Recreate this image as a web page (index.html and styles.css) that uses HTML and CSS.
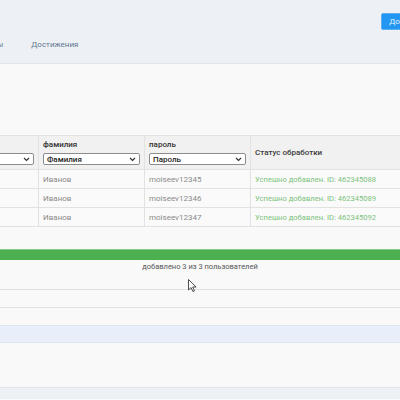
FILE: index.html
```html
<!DOCTYPE html>
<html lang="ru">
<head>
    <meta charset="UTF-8">
    <title>Импорт пользователей</title>
    <link rel="stylesheet" href="styles.css">
</head>
<body>
<div class="top">
    <ul class="nav">
        <li>Группы</li>
        <li>Достижения</li>
    </ul>
    <div class="btn-add">Добавить</div>
</div>
<div class="main">
    <table class="import">
        <thead>
            <tr>
                <th class="col-name">
                    <div class="label">имя</div>
                    <div class="select"><span>Имя</span><svg width="7" height="5" viewBox="0 0 7 5"><path d="M1 1l2.5 2.5L6 1" fill="none" stroke="#333" stroke-width="1.2"/></svg></div>
                </th>
                <th class="col-mid">
                    <div class="label">фамилия</div>
                    <div class="select"><span>Фамилия</span><svg width="7" height="5" viewBox="0 0 7 5"><path d="M1 1l2.5 2.5L6 1" fill="none" stroke="#333" stroke-width="1.2"/></svg></div>
                </th>
                <th class="col-mid">
                    <div class="label">пароль</div>
                    <div class="select"><span>Пароль</span><svg width="7" height="5" viewBox="0 0 7 5"><path d="M1 1l2.5 2.5L6 1" fill="none" stroke="#333" stroke-width="1.2"/></svg></div>
                </th>
                <th class="col-status"><div class="label-status">Статус обработки</div></th>
            </tr>
        </thead>
        <tbody>
            <tr><td>Иван</td><td>Иванов</td><td>moiseev12345</td><td class="ok">Успешно добавлен. ID: 462345088</td></tr>
            <tr><td>Иван</td><td>Иванов</td><td>moiseev12346</td><td class="ok">Успешно добавлен. ID: 462345089</td></tr>
            <tr><td>Иван</td><td>Иванов</td><td>moiseev12347</td><td class="ok">Успешно добавлен. ID: 462345092</td></tr>
        </tbody>
    </table>
    <div class="progress"><div class="progress-bar" style="width:100%"></div></div>
    <div class="progress-text">добавлено 3 из 3 пользователей</div>
    <ul class="rows">
        <li class="row"></li>
        <li class="row"></li>
        <li class="row row-active"></li>
        <li class="row row-tall"></li>
    </ul>
</div>
<div class="footer"></div>
<svg class="cursor" width="9" height="13" viewBox="0 0 9 13"><path d="M0.5 0.5v10.5l2.6-2.4 1.8 3.9 1.6-0.7-1.8-3.8h3.4z" fill="#fff" stroke="#222" stroke-width="0.8" stroke-linejoin="round"/></svg>
</body>
</html>
```

FILE: styles.css
```css
*{margin: 0px;padding: 0px;box-sizing: border-box;}
html,body{
    width: 400px;
    height: 400px;
    overflow: hidden;
}
body{
    font-family: Roboto, "Noto Sans", sans-serif;
    font-size: 8px;
    color: #555;
    background: #f9f9f9;
    position: relative;
}
.top{
    height: 64px;
    background: #edf1f5;
    border-bottom: 1px solid #dfe5eb;
    display: flex;
    justify-content: space-between;
    align-items: flex-start;
}
.nav{
    display: flex;
    gap: 28px;
    margin-left: -24px;
    margin-top: 40px;
    list-style: none;
    color: #5f7690;
    font-size: 8px;
}
.btn-add{
    margin-top: 13px;
    margin-right: -34px;
    height: 17px;
    line-height: 16px;
    padding: 0 7px;
    background: #2196f3;
    border: 1px solid #5ab0f0;
    color: #e8f4ff;
    border-radius: 2px;
    font-size: 8px;
}
.main{
    padding-top: 71px;
}
.import{
    margin-left: -80px;
    width: 520px;
    border-collapse: collapse;
    table-layout: fixed;
}
.import th,.import td{
    border: 1px solid #e2e2e2;
    text-align: left;
    vertical-align: middle;
}
.import thead th{
    background: #f1f1f1;
    height: 34px;
    padding: 3px 4px;
    font-weight: 500;
    color: #333;
}
.col-name{width: 118px;}
.col-mid{width: 106px;}
.col-status{width: 190px;}
.label{
    font-size: 8px;
    line-height: 10px;
    margin-bottom: 3px;
}
.label-status{
    font-size: 8px;
    color: #3a3a3a;
}
.select{
    height: 12px;
    background: #fff;
    border: 1px solid #8c8c8c;
    border-radius: 2px;
    display: flex;
    justify-content: space-between;
    align-items: center;
    padding: 0 3px;
    font-size: 8px;
    color: #222;
}
.import td{
    height: 19px;
    padding: 0 4px;
    background: #fafafa;
    color: #8a8a8a;
    font-size: 8px;
    font-weight: 400;
}
.import td.ok{
    color: #7cc27c;
    font-size: 7.6px;
}
.progress{
    margin-top: 22px;
    height: 11px;
    background: #e5e5e5;
}
.progress-bar{
    height: 100%;
    background: #4caf50;
    border-top: 1px solid #86cb88;
}
.progress-text{
    text-align: center;
    line-height: 14px;
    font-size: 7.5px;
    color: #555;
}
.rows{
    list-style: none;
    margin-top: 15px;
}
.row{
    height: 18px;
    border-top: 1px solid #e2e2e2;
}
.row-active{
    background: #e8effa;
    border-top-color: #dde5f0;
    border-bottom: 1px solid #dde5f0;
}
.row-tall{
    height: 44px;
    border-top: none;
}
.footer{
    height: 12px;
    background: #edf1f6;
    border-top: 1px solid #dfe5eb;
}
.cursor{
    position: absolute;
    left: 188px;
    top: 279px;
}
```
